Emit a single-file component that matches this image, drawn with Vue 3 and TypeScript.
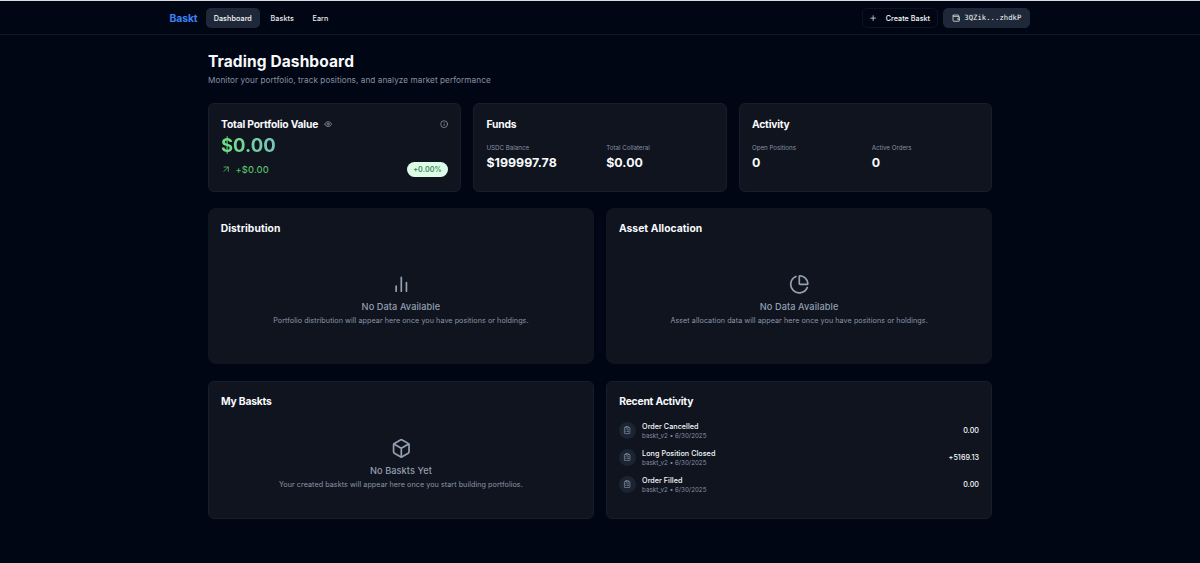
<script setup lang="ts">
interface Stat { label: string; value: string }
interface ActivityItem { title: string; meta: string; amount: string }

const navItems: { label: string; active: boolean }[] = [
  { label: 'Dashboard', active: true },
  { label: 'Baskts', active: false },
  { label: 'Earn', active: false },
]
const summaries: { title: string; stats: Stat[] }[] = [
  {
    title: 'Funds',
    stats: [
      { label: 'USDC Balance', value: '$199997.78' },
      { label: 'Total Collateral', value: '$0.00' },
    ],
  },
  {
    title: 'Activity',
    stats: [
      { label: 'Open Positions', value: '0' },
      { label: 'Active Orders', value: '0' },
    ],
  },
]
const activity: ActivityItem[] = [
  { title: 'Order Cancelled', meta: 'baskt_v2 • 6/30/2025', amount: '0.00' },
  { title: 'Long Position Closed', meta: 'baskt_v2 • 6/30/2025', amount: '+5169.13' },
  { title: 'Order Filled', meta: 'baskt_v2 • 6/30/2025', amount: '0.00' },
]
</script>

<template>
  <div class="page">
    <header class="topbar">
      <div class="bar-inner">
        <span class="brand">Baskt</span>
        <nav class="nav">
          <a v-for="n in navItems" :key="n.label" class="nav-link" :class="{ active: n.active }">{{ n.label }}</a>
        </nav>
        <div class="actions">
          <button class="btn create">
            <svg class="icon plus" viewBox="0 0 24 24"><path d="M5 12h14M12 5v14" /></svg>
            <span>Create Baskt</span>
          </button>
          <button class="btn wallet">
            <svg class="icon" viewBox="0 0 24 24"><path d="M19 7V4a1 1 0 0 0-1-1H5a2 2 0 0 0 0 4h15a1 1 0 0 1 1 1v4h-3a2 2 0 0 0 0 4h3a1 1 0 0 0 1-1v-2a1 1 0 0 0-1-1" /><path d="M3 5v14a2 2 0 0 0 2 2h15a1 1 0 0 0 1-1v-4" /></svg>
            <span>3QZik...zhdkP</span>
          </button>
        </div>
      </div>
    </header>

    <main class="content">
      <h1>Trading Dashboard</h1>
      <p class="subtitle">Monitor your portfolio, track positions, and analyze market performance</p>

      <section class="grid summary">
        <article class="card">
          <div class="title-row">
            <h2>Total Portfolio Value</h2>
            <svg class="icon eye" viewBox="0 0 24 24"><path d="M2.06 12.35a1 1 0 0 1 0-.7 10.75 10.75 0 0 1 19.88 0 1 1 0 0 1 0 .7 10.75 10.75 0 0 1-19.88 0" /><circle cx="12" cy="12" r="3" /></svg>
            <svg class="icon info" viewBox="0 0 24 24"><circle cx="12" cy="12" r="10" /><path d="M12 16v-4M12 8h.01" /></svg>
          </div>
          <div class="total"><span>$0.00</span></div>
          <div class="change-row">
            <svg class="icon arrow" viewBox="0 0 24 24"><path d="M7 7h10v10M7 17 17 7" /></svg>
            <span class="change">+$0.00</span>
            <span class="badge">+0.00%</span>
          </div>
        </article>
        <article v-for="s in summaries" :key="s.title" class="card">
          <div class="title-row"><h2>{{ s.title }}</h2></div>
          <dl class="stats">
            <div v-for="st in s.stats" :key="st.label">
              <dt>{{ st.label }}</dt>
              <dd>{{ st.value }}</dd>
            </div>
          </dl>
        </article>
      </section>

      <section class="grid charts">
        <article class="card borderless">
          <h2 class="wide">Distribution</h2>
          <div class="empty">
            <svg class="icon big" viewBox="0 0 24 24"><path d="M18 20V10M12 20V4M6 20v-6" /></svg>
            <p class="empty-title">No Data Available</p>
            <p class="empty-text">Portfolio distribution will appear here once you have positions or holdings.</p>
          </div>
        </article>
        <article class="card borderless">
          <h2 class="wide">Asset Allocation</h2>
          <div class="empty">
            <svg class="icon big" viewBox="0 0 24 24"><path d="M21 12c.55 0 1-.45.95-1a10 10 0 0 0-8.95-8.95c-.55-.05-1 .4-1 .95v8a1 1 0 0 0 1 1z" /><path d="M21.21 15.89A10 10 0 1 1 8 2.83" /></svg>
            <p class="empty-title">No Data Available</p>
            <p class="empty-text">Asset allocation data will appear here once you have positions or holdings.</p>
          </div>
        </article>
      </section>

      <section class="grid bottom">
        <article class="card">
          <h2>My Baskts</h2>
          <div class="empty">
            <svg class="icon big" viewBox="0 0 24 24"><path d="M21 8a2 2 0 0 0-1-1.73l-7-4a2 2 0 0 0-2 0l-7 4A2 2 0 0 0 3 8v8a2 2 0 0 0 1 1.73l7 4a2 2 0 0 0 2 0l7-4A2 2 0 0 0 21 16Z" /><path d="m3.3 7 8.7 5 8.7-5M12 22V12" /></svg>
            <p class="empty-title">No Baskts Yet</p>
            <p class="empty-text">Your created baskts will appear here once you start building portfolios.</p>
          </div>
        </article>
        <article class="card">
          <h2>Recent Activity</h2>
          <ul class="feed">
            <li v-for="a in activity" :key="a.title">
              <span class="avatar">
                <svg class="icon" viewBox="0 0 24 24"><rect x="8" y="2" width="8" height="4" rx="1" /><path d="M16 4h2a2 2 0 0 1 2 2v14a2 2 0 0 1-2 2H6a2 2 0 0 1-2-2V6a2 2 0 0 1 2-2h2M12 11h4M12 16h4M8 11h.01M8 16h.01" /></svg>
              </span>
              <div class="feed-text">
                <strong>{{ a.title }}</strong>
                <small>{{ a.meta }}</small>
              </div>
              <span class="amount">{{ a.amount }}</span>
            </li>
          </ul>
        </article>
      </section>
    </main>
  </div>
</template>

<style>
html, body { background: #010614; }
body { margin: 0; overflow: hidden; }
</style>

<style scoped>
* { box-sizing: border-box; margin: 0; padding: 0; }
.page {
  height: 563px;
  overflow: hidden;
  background: #010614;
  color: #f8fafc;
  border-top: 1px solid #d9dade;
  font-family: Inter, "Liberation Sans", sans-serif;
  font-size: 7.2px;
}
.icon {
  width: 8.3px;
  height: 8.3px;
  flex: none;
  fill: none;
  stroke: currentColor;
  stroke-width: 2;
  stroke-linecap: round;
  stroke-linejoin: round;
}
.topbar { height: 34px; border-bottom: 1px solid #111827; }
.bar-inner {
  display: flex;
  align-items: center;
  width: 860.5px;
  height: 34px;
  margin-left: 169.5px;
}
.brand { width: 36px; color: #3b82f6; font-size: 10.3px; font-weight: 700; letter-spacing: -0.05px; }
.nav { display: flex; gap: 2.2px; }
.nav-link {
  height: 20.6px;
  padding: 0 8.2px;
  border-radius: 5px;
  font-weight: 500;
  line-height: 21px;
  letter-spacing: 0.08px;
  color: #e9edf3;
}
.nav-link.active { background: #1f2838; color: #f8fafc; }
.actions { display: flex; gap: 5px; margin-left: auto; }
.btn {
  display: flex;
  align-items: center;
  height: 20.4px;
  border: 1px solid #0d1421;
  border-radius: 5px;
  background: transparent;
  color: #f8fafc;
  font-family: inherit;
  font-size: 7.2px;
  font-weight: 500;
  letter-spacing: 0.04px;
}
.create { width: 76px; padding-left: 6px; gap: 8.4px; }
.create span { padding-top: 1px; }
.wallet {
  width: 87px;
  padding-left: 8px;
  gap: 4px;
  background: #1f2838;
  border-color: #1f2838;
  font-family: "DejaVu Sans Mono", "Liberation Mono", monospace;
  font-weight: 400;
  letter-spacing: 0.06px;
}
.content { width: 784px; margin: 0 auto; padding-top: 15.5px; }
h1 { height: 22px; font-size: 15.5px; font-weight: 700; line-height: 22px; letter-spacing: 0.1px; }
.subtitle { height: 12px; margin-top: 1.4px; font-size: 8.2px; line-height: 12px; letter-spacing: 0.07px; color: #8791a2; }
.grid { display: grid; gap: 12.4px; }
.summary { grid-template-columns: repeat(3, 1fr); height: 88.6px; margin-top: 17.1px; }
.charts { grid-template-columns: repeat(2, 1fr); height: 156px; margin-top: 16.8px; }
.bottom { grid-template-columns: repeat(2, 1fr); height: 138.6px; margin-top: 16.4px; }
.card {
  min-width: 0;
  padding: 12px;
  background: #0f141f;
  border: 1px solid #171e2b;
  border-radius: 6px;
}
.borderless { padding: 10.3px 11.7px; border-color: #10161f; border-radius: 8px; }
h2 { font-size: 10.3px; font-weight: 700; line-height: 16px; letter-spacing: -0.19px; white-space: nowrap; }
.wide { font-weight: 650; letter-spacing: 0.06px; }
.bottom h2 { margin-top: -0.6px; }
.title-row { display: flex; align-items: center; height: 16px; }
.eye { margin-left: 6px; color: #9aa4b4; }
.info { margin-left: auto; color: #9aa4b4; }
.total { height: 26px; font-size: 18.5px; font-weight: 700; line-height: 26px; }
.total span {
  background: linear-gradient(90deg, #6fe07f, #78c4bb);
  -webkit-background-clip: text;
  background-clip: text;
  color: transparent;
}
.change-row { display: flex; align-items: center; height: 15px; margin-top: 4px; color: #58bd68; }
.arrow { width: 10.3px; height: 10.3px; }
.change { margin-left: 4.2px; font-size: 9.3px; font-weight: 500; letter-spacing: 0.15px; }
.badge {
  width: 41px;
  height: 15px;
  margin-left: auto;
  border-radius: 8px;
  background: #dcfce7;
  color: #3f8458;
  font-size: 7.2px;
  font-weight: 600;
  line-height: 15px;
  letter-spacing: 0.1px;
  text-align: center;
}
.stats { display: grid; grid-template-columns: 1fr 1fr; gap: 12.4px; margin-top: 11.6px; }
dt { height: 8px; font-size: 6.2px; line-height: 8px; color: #8791a2; }
dd { height: 16px; margin-top: 3.3px; font-size: 12.4px; font-weight: 700; line-height: 16px; letter-spacing: 0.03px; }
.empty { display: flex; flex-direction: column; align-items: center; color: #949fb0; }
.charts .empty { margin-top: 38px; }
.bottom .empty { margin-top: 28.9px; }
.big { width: 20.6px; height: 20.6px; }
.empty-title { margin-top: 5.3px; font-size: 9.2px; font-weight: 500; line-height: 13px; letter-spacing: 0.08px; }
.empty-text { margin-top: 3.3px; font-size: 7.2px; line-height: 10px; letter-spacing: 0.055px; color: #8c96a7; white-space: nowrap; }
.feed { display: flex; flex-direction: column; gap: 10.4px; margin-top: 12.9px; list-style: none; }
.feed li { display: flex; align-items: center; height: 16.6px; }
.avatar {
  display: flex;
  align-items: center;
  justify-content: center;
  width: 16.6px;
  height: 16.6px;
  border-radius: 50%;
  background: #1b2432;
  color: #8d9aae;
}
.feed-text { display: flex; flex-direction: column; margin-left: 6.3px; padding-top: 1.4px; }
strong { font-size: 7.2px; font-weight: 500; line-height: 9.5px; letter-spacing: 0.04px; }
small { font-size: 6.2px; line-height: 9px; letter-spacing: 0.03px; color: #8791a2; }
.amount { margin-left: auto; font-weight: 500; letter-spacing: 0.04px; }
</style>
